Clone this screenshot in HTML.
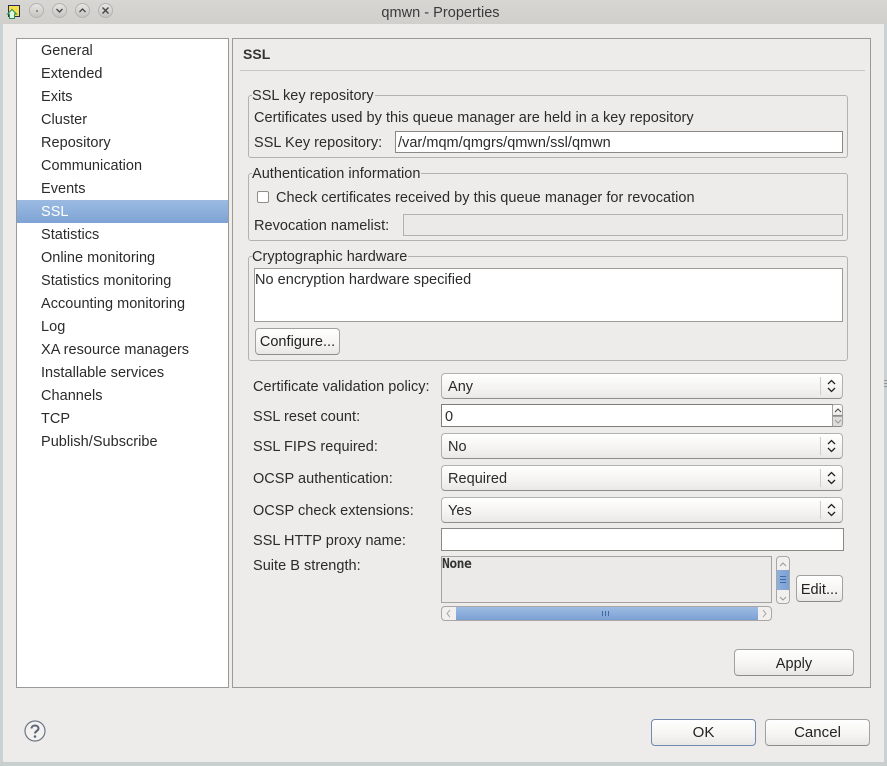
<!DOCTYPE html>
<html><head><meta charset="utf-8">
<style>
html,body{margin:0;padding:0}
body{width:887px;height:766px;overflow:hidden;position:relative;background:#edecea;font-family:"Liberation Sans",sans-serif;font-size:14.5px;letter-spacing:.03px;color:#2b2b2b}
.a{position:absolute}
.t{position:absolute;white-space:nowrap;line-height:17px}
.nav{position:absolute;left:41px;white-space:nowrap;line-height:17px}
.grp{position:absolute;border:1px solid #b4b2ae;border-radius:3px;box-sizing:border-box}
.lg{position:absolute;background:#edecea;padding:0 1px 0 0;white-space:nowrap;line-height:17px;left:252px}
.in{position:absolute;box-sizing:border-box;background:#fff;border:1px solid #8b8985;line-height:22px;white-space:nowrap}
.combo{position:absolute;left:441px;width:402px;height:26px;box-sizing:border-box;border:1px solid #b3b1ad;border-bottom-color:#8f8d89;border-radius:4px;background:linear-gradient(#fff,#f4f3f1 60%,#e9e8e6);line-height:27px;padding-left:6px}
.combo i{position:absolute;right:21px;top:3px;height:18px;border-left:1px solid #cfcdc9}
.combo svg{position:absolute;right:5px;top:4px}
.btn{position:absolute;box-sizing:border-box;border:1px solid #a3a19d;border-bottom-color:#8d8b87;border-radius:4px;background:linear-gradient(#fff,#f5f4f2 60%,#e8e7e5);text-align:center;color:#222}
.wb{position:absolute;top:3px;width:15px;height:15px;border-radius:50%;border:1px solid #b5b3af;background:linear-gradient(#e6e5e3,#c6c4c0);box-sizing:border-box}
</style></head><body>

<div class="a" style="left:0;top:0;width:887px;height:24px;background:linear-gradient(#d8d6d3,#d1cfcb)"></div>
<div class="a" style="left:0;top:24px;width:3px;height:738px;background:#c8d2d2"></div>
<div class="a" style="left:884px;top:24px;width:3px;height:738px;background:#c8d2d2"></div>
<div class="a" style="left:0;top:762px;width:887px;height:4px;background:#c9cfcf"></div>
<svg class="a" style="left:884px;top:379px" width="3" height="9" viewBox="0 0 3 9"><path d="M0 1.5H3M0 4.5H3M0 7.5H3" stroke="#8f9696"/></svg>

<svg class="a" style="left:6px;top:4px" width="16" height="16" viewBox="0 0 16 16"><rect x="2.5" y="1.5" width="11" height="11" fill="#f3e04d" stroke="#2a2a5c"/><path d="M1.5 10 L6 5.5 L10.5 10 H8.5 V14.5 H3.5 V10 Z" fill="#dff5df" stroke="#2f8f4f"/></svg>
<div class="wb" style="left:29px"><div class="a" style="left:5.5px;top:6px;width:2px;height:2px;background:#777;border-radius:50%"></div></div>
<div class="wb" style="left:52px"><svg class="a" style="left:2px;top:2px" width="9" height="9" viewBox="0 0 9 9"><path d="M1.5 3 L4.5 6 L7.5 3" fill="none" stroke="#444" stroke-width="1.3"/></svg></div>
<div class="wb" style="left:75px"><svg class="a" style="left:2px;top:2px" width="9" height="9" viewBox="0 0 9 9"><path d="M1.5 6 L4.5 3 L7.5 6" fill="none" stroke="#444" stroke-width="1.3"/></svg></div>
<div class="wb" style="left:98px"><svg class="a" style="left:2px;top:2px" width="9" height="9" viewBox="0 0 9 9"><path d="M1.5 1.5 L7.5 7.5 M7.5 1.5 L1.5 7.5" fill="none" stroke="#444" stroke-width="1.4"/></svg></div>
<div class="t" style="left:0;width:881px;top:5px;text-align:center;color:#3a3a3a">qmwn - Properties</div>

<div class="a" style="left:16px;top:38px;width:213px;height:650px;box-sizing:border-box;background:#fff;border:1px solid #9c9a96"></div>
<div class="a" style="left:17px;top:200px;width:211px;height:23px;background:linear-gradient(#9bbbe2,#7ea3d4)"></div>
<div class="nav" style="top:43px">General</div>
<div class="nav" style="top:66px">Extended</div>
<div class="nav" style="top:89px">Exits</div>
<div class="nav" style="top:112px">Cluster</div>
<div class="nav" style="top:135px">Repository</div>
<div class="nav" style="top:158px">Communication</div>
<div class="nav" style="top:181px">Events</div>
<div class="nav" style="top:204px;color:#fff">SSL</div>
<div class="nav" style="top:227px">Statistics</div>
<div class="nav" style="top:250px">Online monitoring</div>
<div class="nav" style="top:273px">Statistics monitoring</div>
<div class="nav" style="top:296px">Accounting monitoring</div>
<div class="nav" style="top:319px">Log</div>
<div class="nav" style="top:342px">XA resource managers</div>
<div class="nav" style="top:365px">Installable services</div>
<div class="nav" style="top:388px">Channels</div>
<div class="nav" style="top:411px">TCP</div>
<div class="nav" style="top:434px">Publish/Subscribe</div>

<div class="a" style="left:232px;top:38px;width:639px;height:650px;box-sizing:border-box;border:1px solid #9c9a96"></div>
<div class="t" style="left:243px;top:46px;font-weight:bold;color:#333;font-size:14px">SSL</div>
<div class="a" style="left:240px;top:70px;width:625px;height:1px;background:#c9c7c3"></div>

<div class="grp" style="left:248px;top:95px;width:600px;height:63px"></div>
<div class="lg" style="top:88px">SSL key repository</div>
<div class="t" style="left:254px;top:110px">Certificates used by this queue manager are held in a key repository</div>
<div class="t" style="left:254px;top:135px">SSL Key repository:</div>
<div class="in" style="left:395px;top:131px;width:448px;height:22px;padding-left:2px">/var/mqm/qmgrs/qmwn/ssl/qmwn</div>

<div class="grp" style="left:248px;top:173px;width:600px;height:68px"></div>
<div class="lg" style="top:166px">Authentication information</div>
<div class="a" style="left:257px;top:191px;width:12px;height:12px;box-sizing:border-box;background:#fff;border:1px solid #8f8d89;border-radius:2px"></div>
<div class="t" style="left:276px;top:190px">Check certificates received by this queue manager for revocation</div>
<div class="t" style="left:254px;top:218px">Revocation namelist:</div>
<div class="a" style="left:403px;top:214px;width:440px;height:22px;box-sizing:border-box;border:1px solid #b3b1ad;background:#ebeae8"></div>

<div class="grp" style="left:248px;top:256px;width:600px;height:105px"></div>
<div class="lg" style="top:249px">Cryptographic hardware</div>
<div class="in" style="left:254px;top:268px;width:589px;height:54px;padding-left:0;border-color:#9c9a96;line-height:23px">No encryption hardware specified</div>
<div class="btn" style="left:255px;top:328px;width:85px;height:27px;line-height:27px">Configure...</div>

<div class="t" style="left:253px;top:379px">Certificate validation policy:</div>
<div class="combo" style="top:373px">Any<i></i><svg width="11" height="16" viewBox="0 0 11 16"><path d="M2 6 L5.5 2.5 L9 6 M2 10 L5.5 13.5 L9 10" fill="none" stroke="#222" stroke-width="1.3"/></svg></div>

<div class="t" style="left:253px;top:409px">SSL reset count:</div>
<div class="in" style="left:441px;top:404px;width:392px;height:23px;padding-left:3px;line-height:25px;border-color:#7f7d79">0</div>
<div class="btn" style="left:832px;top:404px;width:11px;height:12px;border-radius:2px 3px 0 0"><svg class="a" style="left:1px;top:2px" width="8" height="7" viewBox="0 0 8 7"><path d="M1 5 L4 2 L7 5" fill="none" stroke="#444"/></svg></div>
<div class="btn" style="left:832px;top:416px;width:11px;height:11px;border-radius:0 0 3px 2px;background:#dddcd9"><svg class="a" style="left:1px;top:1px" width="8" height="7" viewBox="0 0 8 7"><path d="M1 2 L4 5 L7 2" fill="none" stroke="#999"/></svg></div>

<div class="t" style="left:253px;top:439px">SSL FIPS required:</div>
<div class="combo" style="top:433px">No<i></i><svg width="11" height="16" viewBox="0 0 11 16"><path d="M2 6 L5.5 2.5 L9 6 M2 10 L5.5 13.5 L9 10" fill="none" stroke="#222" stroke-width="1.3"/></svg></div>

<div class="t" style="left:253px;top:471px">OCSP authentication:</div>
<div class="combo" style="top:465px">Required<i></i><svg width="11" height="16" viewBox="0 0 11 16"><path d="M2 6 L5.5 2.5 L9 6 M2 10 L5.5 13.5 L9 10" fill="none" stroke="#222" stroke-width="1.3"/></svg></div>

<div class="t" style="left:253px;top:503px">OCSP check extensions:</div>
<div class="combo" style="top:497px">Yes<i></i><svg width="11" height="16" viewBox="0 0 11 16"><path d="M2 6 L5.5 2.5 L9 6 M2 10 L5.5 13.5 L9 10" fill="none" stroke="#222" stroke-width="1.3"/></svg></div>

<div class="t" style="left:253px;top:533px">SSL HTTP proxy name:</div>
<div class="in" style="left:441px;top:528px;width:403px;height:23px"></div>

<div class="t" style="left:253px;top:558px">Suite B strength:</div>
<div class="a" style="left:441px;top:556px;width:331px;height:47px;box-sizing:border-box;border:1px solid #a5a39f;background:#ebeae8;font:bold 13px/13px 'DejaVu Sans Mono','Liberation Mono',monospace;color:#333;letter-spacing:-.5px;padding-top:1px">None</div>

<div class="a" style="left:776px;top:556px;width:14px;height:48px;box-sizing:border-box;border:1px solid #a9a7a3;border-radius:4px;background:#f1f0ee"></div>
<div class="a" style="left:777px;top:570px;width:12px;height:20px;background:linear-gradient(90deg,#8fb0dc,#7ba0d3)"></div>
<svg class="a" style="left:777px;top:558px" width="12" height="46" viewBox="0 0 12 46"><path d="M3 8 L6 5 L9 8" fill="none" stroke="#999"/><path d="M3 39 L6 42 L9 39" fill="none" stroke="#999"/><path d="M3 18.5H9M3 21.5H9M3 24.5H9" stroke="#3f6aa8"/></svg>

<div class="a" style="left:441px;top:606px;width:331px;height:15px;box-sizing:border-box;border:1px solid #a9a7a3;border-radius:4px;background:#f1f0ee"></div>
<div class="a" style="left:456px;top:607px;width:302px;height:13px;background:linear-gradient(#9dbce3,#7ba0d3)"></div>
<svg class="a" style="left:441px;top:606px" width="331" height="15" viewBox="0 0 331 15"><path d="M9 4 L6 7.5 L9 11" fill="none" stroke="#aaa"/><path d="M322 4 L325 7.5 L322 11" fill="none" stroke="#aaa"/><path d="M161.5 5V10M164.5 5V10M167.5 5V10" stroke="#3f6aa8"/></svg>

<div class="btn" style="left:796px;top:575px;width:47px;height:27px;line-height:28px">Edit...</div>
<div class="btn" style="left:734px;top:649px;width:120px;height:27px;line-height:28px">Apply</div>

<svg class="a" style="left:24px;top:720px" width="22" height="22" viewBox="0 0 22 22"><circle cx="11" cy="11" r="10" fill="#f3f2f0" stroke="#6d7685" stroke-width="1.2"/><path d="M7.5 8.5 C7.5 4.5 14.5 4.5 14.5 8.5 C14.5 11 11 11 11 13.5" fill="none" stroke="#5c6679" stroke-width="2"/><circle cx="11" cy="16.5" r="1.3" fill="#5c6679"/></svg>

<div class="btn" style="left:651px;top:719px;width:105px;height:27px;line-height:26px;border-color:#6f8aad;font-size:15px">OK</div>
<div class="btn" style="left:765px;top:719px;width:105px;height:27px;line-height:26px;font-size:15px">Cancel</div>

</body></html>
